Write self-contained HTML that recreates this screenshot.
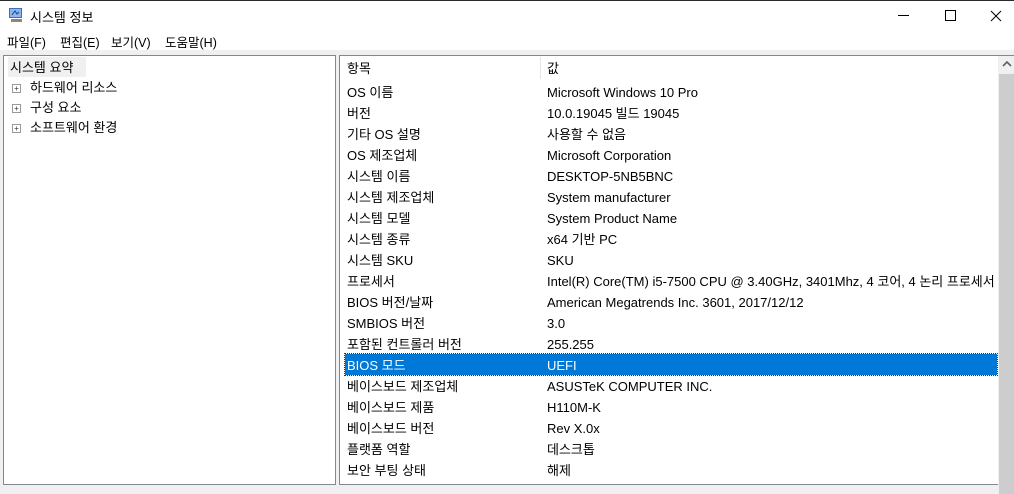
<!DOCTYPE html>
<html><head><meta charset="utf-8"><style>
body{margin:0;width:1014px;height:479px;overflow:hidden;background:#f0f0f0;font-family:"Liberation Sans","Noto Sans CJK KR",sans-serif;font-size:13px;color:#000;position:relative}
.abs{position:absolute}
#title{left:0;top:0;width:1014px;height:29px;background:#fff;border-top:1px solid #2b2b2b;box-sizing:border-box}
#menu{left:0;top:29px;width:1014px;height:21px;background:#fff}
#menu span{position:absolute;top:3px;font-size:12.5px}
#left{left:3px;top:55px;width:333px;height:430px;background:#fff;border:1px solid #828790;box-sizing:border-box}
#right{left:339px;top:55px;width:680px;height:430px;background:#fff;border:1px solid #828790;box-sizing:border-box}
.row{position:absolute;left:7px;height:21px;line-height:23px;width:650px}
.row .v{position:absolute;left:200px;white-space:nowrap}
.sel{background:#0078d7;color:#fff;outline:1px dotted #333;left:5px;padding-left:2px;width:650px}
.tn{position:absolute;left:8px;height:20px;line-height:21px}
.pl{display:inline-block;width:7px;height:7px;border:1px solid #999;font-size:8px;line-height:7px;text-align:center;color:#333;margin-right:9px;vertical-align:1px}
</style></head><body>
<div id="title" class="abs">
<svg class="abs" style="left:8px;top:6px" width="16" height="16" viewBox="0 0 16 16"><rect x="1" y="1" width="13" height="10" fill="#3a6fc4"/><rect x="2" y="2" width="11" height="8" fill="#8db6ec"/><path d="M4 8l3-4 2 3 2-2" stroke="#1a3f8a" fill="none"/><rect x="3" y="12" width="11" height="3" fill="#888"/></svg>
<span class="abs" style="left:30px;top:6px;font-size:13px">시스템 정보</span>
<div class="abs" style="left:898px;top:14px;width:11px;height:1px;background:#000"></div>
<div class="abs" style="left:945px;top:9px;width:9px;height:9px;border:1px solid #000"></div>
<svg class="abs" style="left:990px;top:9px" width="12" height="12"><path d="M1 1L11 11M11 1L1 11" stroke="#000" stroke-width="1"/></svg>
</div>
<div id="menu" class="abs"><span style="left:7px">파일(F)</span><span style="left:60px">편집(E)</span><span style="left:111px">보기(V)</span><span style="left:165px">도움말(H)</span></div>
<div id="left" class="abs">
<div class="abs" style="left:4px;top:1px;width:78px;height:20px;background:#f0f0f0"></div>
<div class="tn" style="top:1px;left:6px">시스템 요약</div>
<div class="tn" style="top:21px"><span class="pl">+</span>하드웨어 리소스</div>
<div class="tn" style="top:41px"><span class="pl">+</span>구성 요소</div>
<div class="tn" style="top:61px"><span class="pl">+</span>소프트웨어 환경</div>
</div>
<div id="right" class="abs">
<div class="abs" style="left:200px;top:1px;width:1px;height:22px;background:#e5e5e5"></div>
<div class="row" style="top:1px">항목<span class="v">값</span></div>
<div class="row" style="top:25px">OS 이름<span class="v">Microsoft Windows 10 Pro</span></div>
<div class="row" style="top:46px">버전<span class="v">10.0.19045 빌드 19045</span></div>
<div class="row" style="top:67px">기타 OS 설명<span class="v">사용할 수 없음</span></div>
<div class="row" style="top:88px">OS 제조업체<span class="v">Microsoft Corporation</span></div>
<div class="row" style="top:109px">시스템 이름<span class="v">DESKTOP-5NB5BNC</span></div>
<div class="row" style="top:130px">시스템 제조업체<span class="v">System manufacturer</span></div>
<div class="row" style="top:151px">시스템 모델<span class="v">System Product Name</span></div>
<div class="row" style="top:172px">시스템 종류<span class="v">x64 기반 PC</span></div>
<div class="row" style="top:193px">시스템 SKU<span class="v">SKU</span></div>
<div class="row" style="top:214px">프로세서<span class="v">Intel(R) Core(TM) i5-7500 CPU @ 3.40GHz, 3401Mhz, 4 코어, 4 논리 프로세서</span></div>
<div class="row" style="top:235px">BIOS 버전/날짜<span class="v">American Megatrends Inc. 3601, 2017/12/12</span></div>
<div class="row" style="top:256px">SMBIOS 버전<span class="v">3.0</span></div>
<div class="row" style="top:277px">포함된 컨트롤러 버전<span class="v">255.255</span></div>
<div class="row sel" style="top:298px">BIOS 모드<span class="v" style="left:202px">UEFI</span></div>
<div class="row" style="top:319px">베이스보드 제조업체<span class="v">ASUSTeK COMPUTER INC.</span></div>
<div class="row" style="top:340px">베이스보드 제품<span class="v">H110M-K</span></div>
<div class="row" style="top:361px">베이스보드 버전<span class="v">Rev X.0x</span></div>
<div class="row" style="top:382px">플랫폼 역할<span class="v">데스크톱</span></div>
<div class="row" style="top:403px">보안 부팅 상태<span class="v">해제</span></div>
<div class="abs" style="left:658px;top:0;width:17px;height:430px;background:#f0f0f0"></div>
<div class="abs" style="left:659px;top:18px;width:16px;height:420px;background:#cdcdcd"></div>
<svg class="abs" style="left:662px;top:5px" width="10" height="7"><path d="M1 5L5 1L9 5" stroke="#606060" stroke-width="1.6" fill="none"/></svg>
</div>
</body></html>
